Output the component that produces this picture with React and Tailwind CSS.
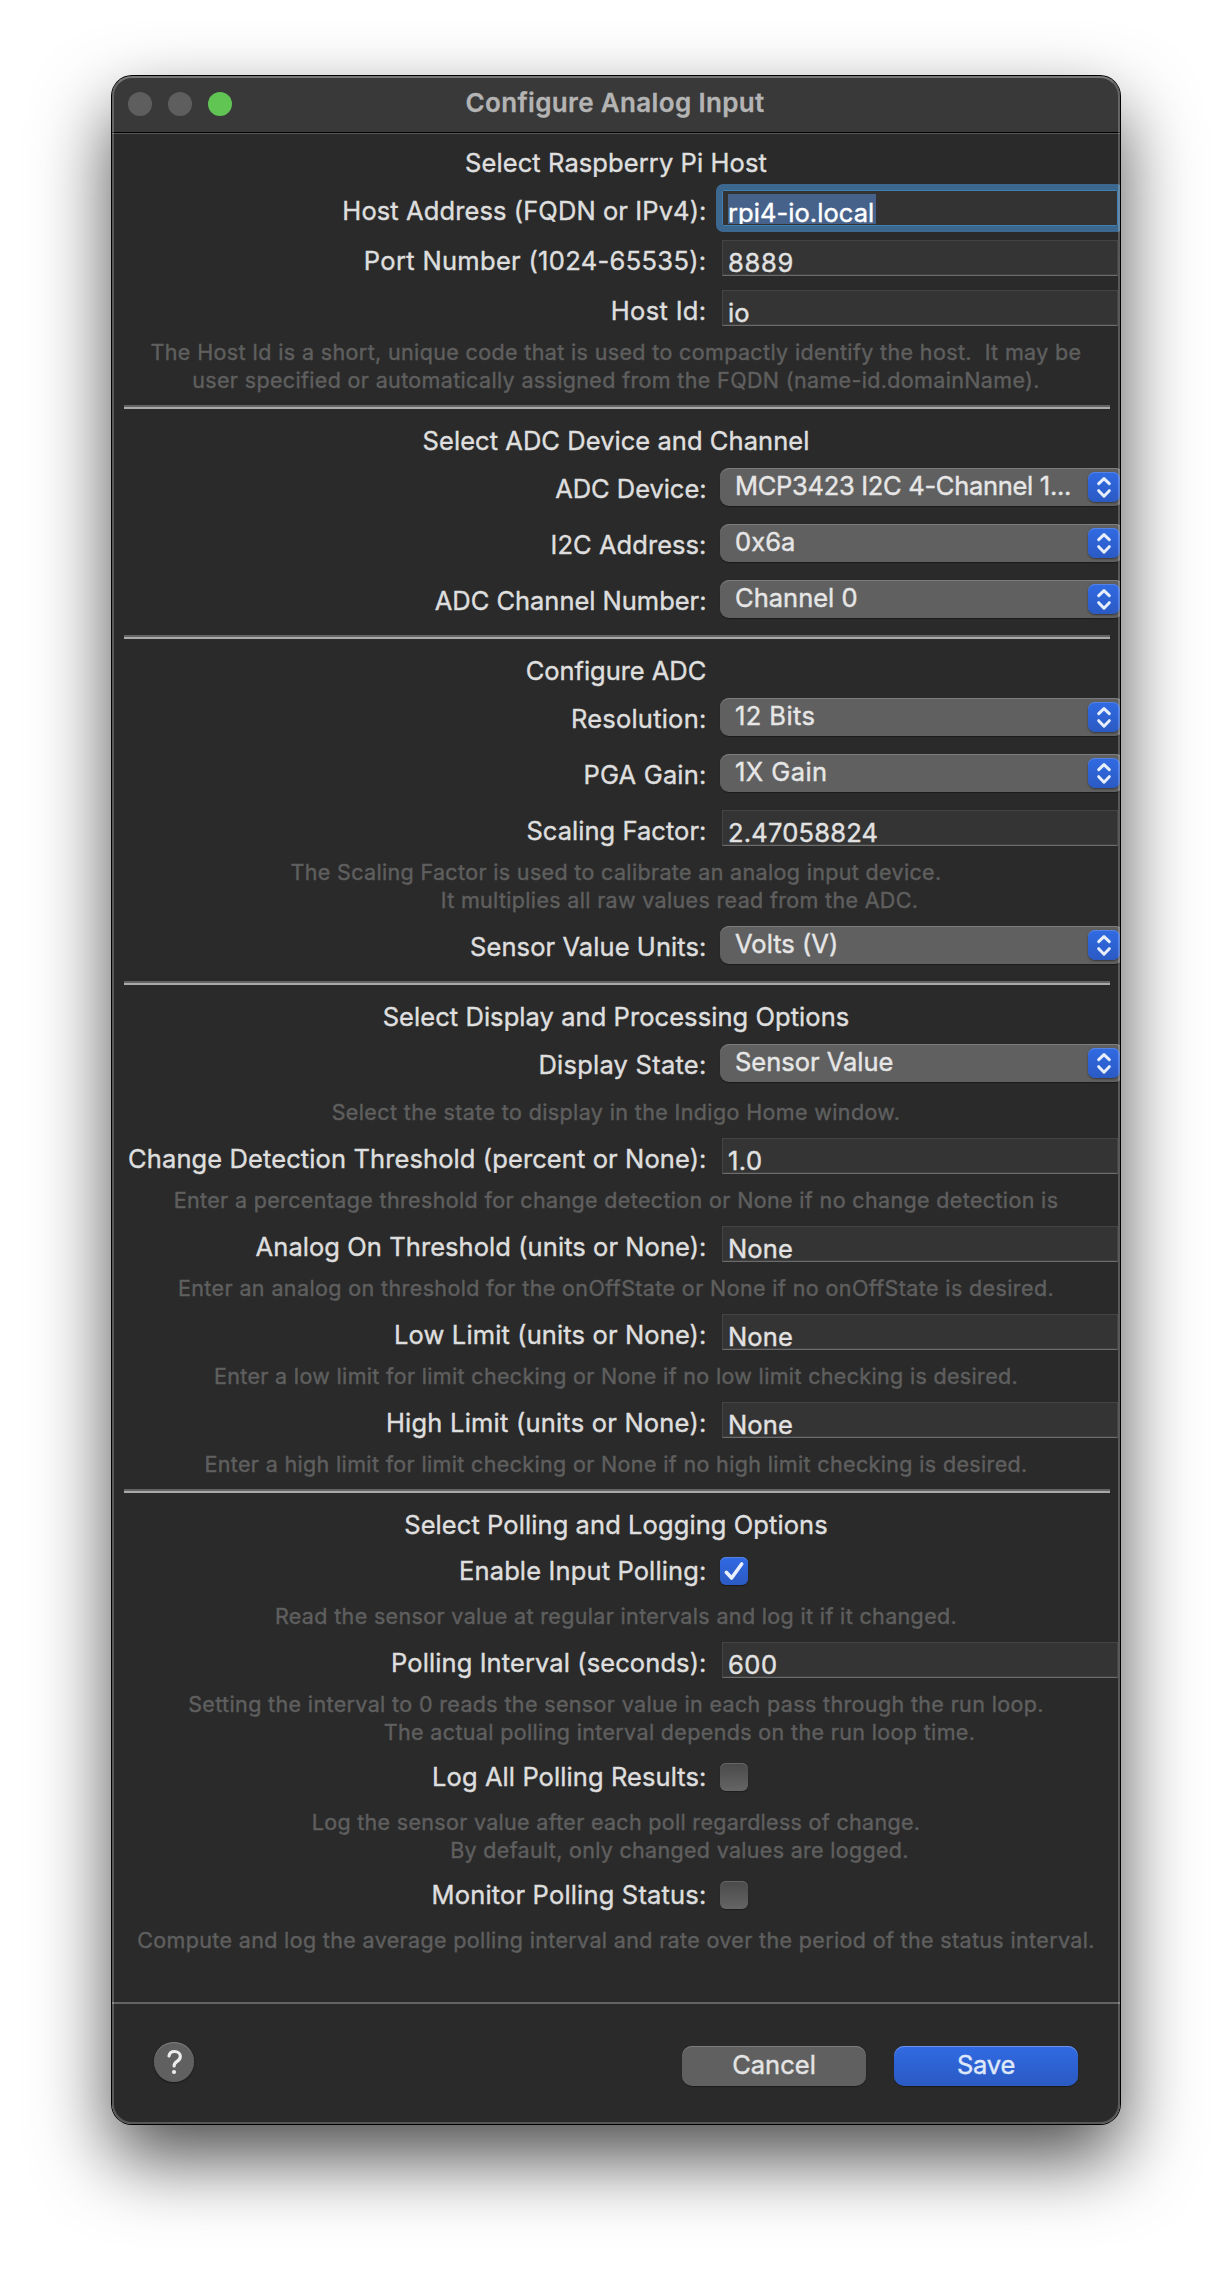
const textSm = "whitespace-pre text-[21.5px] leading-[28px] text-[#5f5f5f] [-webkit-text-stroke:0.4px]";
const textMd = "whitespace-pre text-[25.5px] leading-[31px] [-webkit-text-stroke:0.4px]";

function Heading({ children, className }) {
  return (
    <h2 className={`mt-4 flex justify-center text-[#dfdfdf] ${textMd} ${className}`}>{children}</h2>
  );
}

function Divider({ className = "mt-[17px]" }) {
  return <div className={`ml-3 h-1 w-[986px] border-b-2 border-[#a9a9a9] bg-[#636363] ${className}`} />;
}

function Label({ children, className = "mt-[5px]", tracking }) {
  return (
    <div className={`mr-[0.5px] flex w-[594.5px] shrink-0 justify-end text-[#dedede] ${textMd} ${className} ${tracking}`}>
      {children}
    </div>
  );
}

function Field({ label, value, className = "mt-3", tracking, valueTracking, focused }) {
  return (
    <div className={`flex h-9 ${className}`}>
      <Label tracking={tracking}>{label}</Label>
      {focused ? (
        <div className="relative ml-[15px] h-9 w-[396px] shrink-0 rounded-[1px] border border-[#4180b4] bg-[#333333] outline-[6px] outline-[#3c688f] outline-solid">
          <div className="mt-[3px] ml-[5px] h-[30px] w-[148px] overflow-hidden bg-[#47628a]">
            <div className={`mt-[3px] text-white ${textMd} ${valueTracking}`}>{value}</div>
          </div>
        </div>
      ) : (
        <div className="ml-[15px] h-9 w-[396px] shrink-0 border border-[#444444] border-b-[#6c6c6c] bg-[#343434] shadow-[inset_0_-1px_0_#404040]">
          <div className={`mt-1.5 ml-[5px] text-[#e2e2e2] ${textMd} ${valueTracking}`}>{value}</div>
        </div>
      )}
    </div>
  );
}

function Popup({ label, value, className = "mt-[18px]", tracking, valueTracking }) {
  return (
    <div className={`flex h-[38px] ${className}`}>
      <Label tracking={tracking}>{label}</Label>
      <div className="ml-[13px] flex h-[38px] w-[404px] shrink-0 rounded-[9px] bg-[#606060] shadow-[0_1px_1px_rgba(0,0,0,0.35),inset_0_1px_0_#7d7d7d]">
        <div className={`mt-0.5 ml-[15px] w-[353px] text-[#e6e6e6] ${textMd} ${valueTracking}`}>{value}</div>
        <div className="mt-1 h-[30px] w-8 rounded-[7px] bg-linear-to-b from-[#306ae3] to-[#2b5ac3] shadow-[0_1px_2px_rgba(0,0,0,0.45),inset_0_1px_0_#5584e4]">
          <svg viewBox="0 0 32 30" className="h-[30px] w-8" fill="none" stroke="#e6edfb" strokeWidth="3" strokeLinecap="round" strokeLinejoin="round">
            <path d="M10.7 11.7 16 6.6l5.3 5.1M10.7 18.7 16 24.2l5.3-5.5" />
          </svg>
        </div>
      </div>
    </div>
  );
}

function Check({ label, checked, tracking }) {
  return (
    <div className="mt-[15px] flex h-[31px]">
      <Label className="" tracking={tracking}>{label}</Label>
      {checked ? (
        <div className="mt-0.5 ml-[13px] size-7 rounded-[6px] bg-linear-to-b from-[#306ae3] to-[#2b5ac3] shadow-[0_1px_1px_rgba(0,0,0,0.4),inset_0_1px_0_#5584e4]">
          <svg viewBox="0 0 28 28" className="size-7" fill="none" stroke="#e9effc" strokeWidth="3.6" strokeLinecap="round" strokeLinejoin="round">
            <path d="M6.3 15.3 11.6 21 21.7 7" />
          </svg>
        </div>
      ) : (
        <div className="mt-0.5 ml-[13px] size-7 rounded-[6px] bg-linear-to-b from-[#4a4a4a] to-[#656565] shadow-[0_1px_1px_rgba(0,0,0,0.3),inset_0_1px_0_#666666]" />
      )}
    </div>
  );
}

function Hint({ children, className = "mt-3" }) {
  return <div className={`${textSm} ${className}`}>{children}</div>;
}

function Line({ children, className = "tracking-[0.349px]", indent }) {
  return <p className={`flex justify-center ${indent ? "pl-[127px]" : ""} ${className}`}>{children}</p>;
}

export default function App() {
  return (
    <main className="h-[2272px] w-[1232px] overflow-hidden bg-white pt-[76px] pl-28 font-['Inter',sans-serif]">
      <div className="h-[2048px] w-[1008px] rounded-[20px] shadow-[0_0_0_1px_#000,0_34px_76px_rgba(0,0,0,0.7)]">
        <div className="relative flex h-[2048px] w-[1008px] flex-col overflow-hidden rounded-[20px] bg-[#2a2a2a]">
          <header className="relative flex h-[58px] shrink-0 items-start border-b border-[#565656] bg-[#393939] shadow-[inset_0_-1px_0_#000]">
            <div className="mt-4 ml-4 flex gap-4">
              <span className="size-6 rounded-full bg-[#5e5e5e]" />
              <span className="size-6 rounded-full bg-[#5e5e5e]" />
              <span className="size-6 rounded-full bg-[#61c554]" />
            </div>
            <h1 className="mt-[11px] ml-[233.5px] text-[26px] leading-[31px] font-semibold tracking-[0.349px] whitespace-pre text-[#b4b4b4] [-webkit-text-stroke:0.3px]">
              Configure Analog Input
            </h1>
          </header>

          <section className="flex flex-col">
            <Heading className="mt-[13px]! tracking-[0.094px]">Select Raspberry Pi Host</Heading>
            <Field focused label="Host Address (FQDN or IPv4):" value="rpi4-io.local" tracking="tracking-[0.096px]" valueTracking="tracking-[0.05px]" />
            <Field label="Port Number (1024-65535):" value="8889" className="mt-3.5" tracking="tracking-[0.32px]" valueTracking="tracking-[0.724px]" />
            <Field label="Host Id:" value="io" className="mt-3.5" tracking="tracking-[0.332px]" valueTracking="tracking-[0.1px]" />
            <Hint>
              <Line className="tracking-[0.359px]">The Host Id is a short, unique code that is used to compactly identify the host.  It may be</Line>
              <Line className="tracking-[0.348px]">user specified or automatically assigned from the FQDN (name-id.domainName).</Line>
            </Hint>
          </section>
          <Divider className="mt-[11px]" />

          <section className="flex flex-col">
            <Heading className="tracking-[0.049px]">Select ADC Device and Channel</Heading>
            <Popup label="ADC Device:" value="MCP3423 I2C 4-Channel 1..." className="mt-3" tracking="tracking-[-0.051px]" valueTracking="tracking-[-0.299px]" />
            <Popup label="I2C Address:" value="0x6a" tracking="tracking-[0.047px]" valueTracking="tracking-[0.06px]" />
            <Popup label="ADC Channel Number:" value="Channel 0" tracking="tracking-[-0.021px]" valueTracking="tracking-[0.016px]" />
          </section>
          <Divider />

          <section className="flex flex-col">
            <Heading className="tracking-[-0.044px]">Configure ADC</Heading>
            <Popup label="Resolution:" value="12 Bits" className="mt-3" tracking="tracking-[0.222px]" valueTracking="tracking-[0.409px]" />
            <Popup label="PGA Gain:" value="1X Gain" tracking="tracking-[0.176px]" valueTracking="tracking-[0.424px]" />
            <Field label="Scaling Factor:" value="2.47058824" className="mt-[18px]" tracking="tracking-[0.048px]" valueTracking="tracking-[0.2px]" />
            <Hint>
              <Line className="tracking-[0.34px]">The Scaling Factor is used to calibrate an analog input device.</Line>
              <Line indent className="tracking-[0.329px]">It multiplies all raw values read from the ADC.</Line>
            </Hint>
            <Popup label="Sensor Value Units:" value="Volts (V)" className="mt-3" tracking="tracking-[0.084px]" valueTracking="tracking-[0.03px]" />
          </section>
          <Divider />

          <section className="flex flex-col">
            <Heading className="tracking-[0.063px]">Select Display and Processing Options</Heading>
            <Popup label="Display State:" value="Sensor Value" className="mt-3" tracking="tracking-[0.24px]" valueTracking="tracking-[-0.017px]" />
            <Hint className="mt-4">
              <Line className="tracking-[0.374px]">Select the state to display in the Indigo Home window.</Line>
            </Hint>
            <Field label="Change Detection Threshold (percent or None):" value="1.0" tracking="tracking-[0.103px]" valueTracking="tracking-[0.465px]" />
            <Hint>
              <Line className="tracking-[0.355px]">Enter a percentage threshold for change detection or None if no change detection is</Line>
            </Hint>
            <Field label="Analog On Threshold (units or None):" value="None" tracking="tracking-[0.065px]" valueTracking="tracking-[0.144px]" />
            <Hint>
              <Line className="tracking-[0.386px]">Enter an analog on threshold for the onOffState or None if no onOffState is desired.</Line>
            </Hint>
            <Field label="Low Limit (units or None):" value="None" tracking="tracking-[0.129px]" valueTracking="tracking-[0.144px]" />
            <Hint>
              <Line className="tracking-[0.332px]">Enter a low limit for limit checking or None if no low limit checking is desired.</Line>
            </Hint>
            <Field label="High Limit (units or None):" value="None" tracking="tracking-[0.212px]" valueTracking="tracking-[0.144px]" />
            <Hint>
              <Line>Enter a high limit for limit checking or None if no high limit checking is desired.</Line>
            </Hint>
          </section>
          <Divider className="mt-[11px]" />

          <section className="flex flex-col">
            <Heading className="tracking-[0.079px]">Select Polling and Logging Options</Heading>
            <Check checked label="Enable Input Polling:" tracking="tracking-[0.133px]" />
            <Hint className="mt-4">
              <Line>Read the sensor value at regular intervals and log it if it changed.</Line>
            </Hint>
            <Field label="Polling Interval (seconds):" value="600" tracking="tracking-[0.096px]" valueTracking="tracking-[0.55px]" />
            <Hint>
              <Line className="tracking-[0.357px]">Setting the interval to 0 reads the sensor value in each pass through the run loop.</Line>
              <Line indent className="tracking-[0.353px]">The actual polling interval depends on the run loop time.</Line>
            </Hint>
            <Check label="Log All Polling Results:" tracking="tracking-[0.086px]" />
            <Hint className="mt-4">
              <Line className="tracking-[0.305px]">Log the sensor value after each poll regardless of change.</Line>
              <Line indent className="tracking-[0.302px]">By default, only changed values are logged.</Line>
            </Hint>
            <Check label="Monitor Polling Status:" tracking="tracking-[0.178px]" />
            <Hint className="mt-4">
              <Line>Compute and log the average polling interval and rate over the period of the status interval.</Line>
            </Hint>
          </section>

          <footer className="mt-12 flex grow items-start border-t-2 border-[#636363] px-[42px]">
            <button className="mt-[38px] size-10 rounded-full bg-[#606060] shadow-[0_1px_2px_rgba(0,0,0,0.4),inset_0_1px_0_#7d7d7d]">
              <svg viewBox="0 0 40 40" className="size-10" fill="none" stroke="#ececec" strokeWidth="3.2" strokeLinecap="round" strokeLinejoin="round">
                <path d="M15 14c.5-3 2.600-4.500 5.400-4.500 3.400 0 5.900 2 5.900 4.900 0 2.300-1.200 3.600-3.200 4.900-2 1.300-3 2.300-3 4.600" />
                <circle cx="20" cy="30" r="2.1" fill="#ececec" stroke="none" />
              </svg>
            </button>
            <button className={`mt-[42px] ml-auto flex h-10 w-[184px] justify-center rounded-[10px] bg-[#606060] pt-[3px] tracking-[0.011px] text-[#e4e4e4] shadow-[0_1px_1px_rgba(0,0,0,0.35),inset_0_1px_0_#7d7d7d] ${textMd}`}>
              Cancel
            </button>
            <button className={`mt-[42px] ml-7 flex h-10 w-[184px] justify-center rounded-[10px] bg-linear-to-b from-[#306ae3] to-[#2b5ac3] pt-[3px] tracking-[-0.213px] text-[#dfe8fa] shadow-[0_1px_1px_rgba(0,0,0,0.35),inset_0_1px_0_#6d94ea] ${textMd}`}>
              Save
            </button>
          </footer>

          <div className="pointer-events-none absolute inset-0 rounded-[20px] border-2 border-white/22 border-t-white/32" />
        </div>
      </div>
    </main>
  );
}
